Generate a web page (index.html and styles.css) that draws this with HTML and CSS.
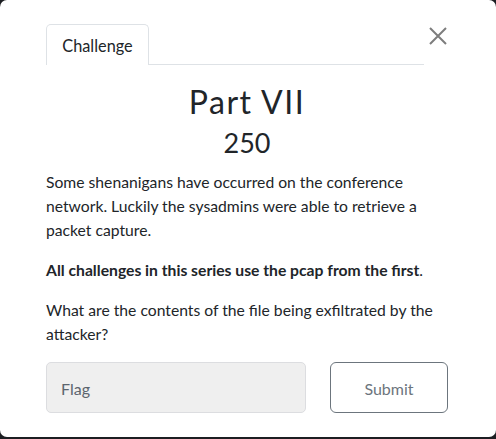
FILE: index.html
```html
<!DOCTYPE html>
<html>
<head>
<meta charset="utf-8">
<link rel="stylesheet" href="styles.css">
</head>
<body>
<div class="modal">
  <div class="head">
    <div class="tabs">
      <div class="tab">Challenge</div>
    </div>
    <div class="close">
      <svg width="18" height="18" viewBox="0 0 18 18"><path d="M1 1 L17 17 M17 1 L1 17" stroke="#7d7d7d" stroke-width="2" fill="none"/></svg>
    </div>
  </div>
  <h3 class="title">Part VII</h3>
  <div class="value">250</div>
  <div class="desc">
    <p>Some shenanigans have occurred on the conference network. Luckily the sysadmins were able to retrieve a packet capture.</p>
    <p><b>All challenges in this series use the pcap from the first</b>.</p>
    <p>What are the contents of the file being exfiltrated by the attacker?</p>
  </div>
  <div class="form">
    <div class="input">Flag</div>
    <div class="btn">Submit</div>
  </div>
</div>
</body>
</html>
```
FILE: styles.css
```css
html, body { margin: 0; padding: 0; }
body {
  background: #1c1e22;
  width: 496px;
  height: 439px;
  overflow: hidden;
  font-family: Lato, "Open Sans", sans-serif;
  color: #212529;
}
.modal {
  background: #fff;
  height: 437px;
  border-radius: 7px;
  box-sizing: border-box;
  padding: 24px 48px 0 46px;
}
.head {
  display: flex;
  align-items: flex-start;
}
.tabs {
  width: 378px;
  border-bottom: 1px solid #dee2e6;
  display: flex;
}
.tab {
  width: 101px;
  height: 40px;
  border: 1px solid #dee2e6;
  border-bottom: none;
  border-radius: 5px 5px 0 0;
  margin-bottom: -1px;
  background: #fff;
  font-size: 16.3px;
  line-height: 42px;
  text-align: center;
  color: #212529;
}
.close {
  margin-left: 5px;
  margin-top: 3px;
  width: 18px;
  height: 18px;
}
.close svg { display: block; }
.title {
  margin: 18px 0 0 0;
  text-align: center;
  font-weight: 400;
  font-size: 32px;
  line-height: 38px;
  letter-spacing: 1.5px;
}
.value {
  text-align: center;
  font-size: 27px;
  line-height: 32px;
  margin-top: 6px;
}
.desc {
  margin-top: 11px;
  font-size: 15.7px;
  line-height: 24px;
}
.desc p { margin: 0 0 16px 0; }
.desc b { font-weight: 700; }
.form {
  display: flex;
  gap: 24px;
  margin-top: 11px;
}
.input {
  width: 260px;
  height: 51px;
  box-sizing: border-box;
  background: #efefef;
  border: 1px solid #dcdde0;
  border-radius: 5px;
  padding-left: 14px;
  line-height: 51px;
  font-size: 16px;
  color: #5c656e;
}
.btn {
  width: 118px;
  height: 51px;
  box-sizing: border-box;
  border: 1px solid #6c757d;
  border-radius: 6px;
  text-align: center;
  line-height: 51px;
  font-size: 16px;
  color: #6c757d;
}
```
